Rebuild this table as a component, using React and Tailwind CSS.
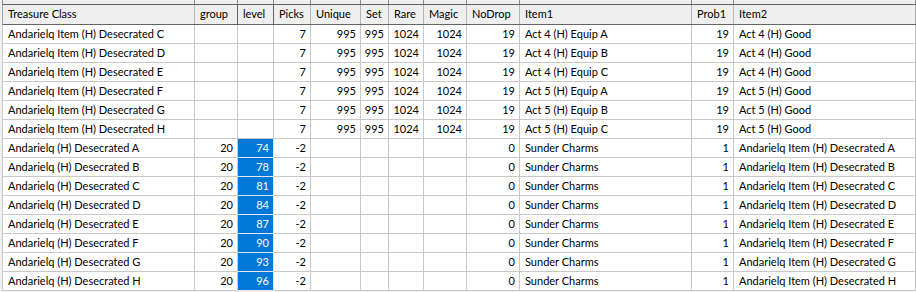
import React from "react";

const cols = [
  { key: "tc", label: "Treasure Class", w: "w-[192px]", align: "left" },
  { key: "group", label: "group", w: "w-[43px]", align: "right" },
  { key: "level", label: "level", w: "w-[36px]", align: "right" },
  { key: "picks", label: "Picks", w: "w-[37px]", align: "right" },
  { key: "unique", label: "Unique", w: "w-[50px]", align: "right" },
  { key: "set", label: "Set", w: "w-[28px]", align: "right" },
  { key: "rare", label: "Rare", w: "w-[35px]", align: "right" },
  { key: "magic", label: "Magic", w: "w-[43px]", align: "right" },
  { key: "nodrop", label: "NoDrop", w: "w-[53px]", align: "right" },
  { key: "item1", label: "Item1", w: "w-[172px]", align: "left" },
  { key: "prob1", label: "Prob1", w: "w-[42px]", align: "right" },
  { key: "item2", label: "Item2", w: "flex-1", align: "left" },
];

const itemRows = [
  ["C", "Act 4 (H) Equip A", "Act 4 (H) Good"],
  ["D", "Act 4 (H) Equip B", "Act 4 (H) Good"],
  ["E", "Act 4 (H) Equip C", "Act 4 (H) Good"],
  ["F", "Act 5 (H) Equip A", "Act 5 (H) Good"],
  ["G", "Act 5 (H) Equip B", "Act 5 (H) Good"],
  ["H", "Act 5 (H) Equip C", "Act 5 (H) Good"],
].map(([l, i1, i2]) => ({
  tc: `Andarielq Item (H) Desecrated ${l}`,
  group: "",
  level: "",
  picks: "7",
  unique: "995",
  set: "995",
  rare: "1024",
  magic: "1024",
  nodrop: "19",
  item1: i1,
  prob1: "19",
  item2: i2,
}));

const levels = [74, 78, 81, 84, 87, 90, 93, 96];
const groupRows = ["A", "B", "C", "D", "E", "F", "G", "H"].map((l, i) => ({
  tc: `Andarielq (H) Desecrated ${l}`,
  group: "20",
  level: String(levels[i]),
  picks: "-2",
  unique: "",
  set: "",
  rare: "",
  magic: "",
  nodrop: "0",
  item1: "Sunder Charms",
  prob1: "1",
  item2: `Andarielq Item (H) Desecrated ${l}`,
  selected: true,
}));

const rows = [...itemRows, ...groupRows];

export default function App() {
  return (
    <div
      className="w-[916px] h-[292px] overflow-hidden bg-[#f0f0f0] text-[11px] text-black"
      style={{ fontFamily: 'Lato, "Noto Sans", sans-serif' }}
    >
      {/* strip of the row above the header */}
      <div className="flex h-[4px] ml-[2px] border-l border-[#8c8c8c] bg-[#efefef]">
        {cols.map((c) => (
          <div key={c.key} className={`${c.w} shrink-0 border-r border-[#8c8c8c]`} />
        ))}
      </div>

      {/* header */}
      <div className="flex h-[21px] ml-[2px] border-l border-y border-[#646464] border-l-[#a0a0a0] bg-[#efefef]">
        {cols.map((c) => (
          <div
            key={c.key}
            className={`${c.w} shrink-0 flex items-center px-[5px] whitespace-nowrap overflow-hidden ${
              c.key === "group" || c.key === "level" ? "border-r border-[#646464]" : "border-r border-[#b4b4b4]"
            }`}
          >
            {c.label}
          </div>
        ))}
      </div>

      {/* body */}
      <div className="ml-[2px] border-l border-[#c8c8c8] bg-white">
        {rows.map((r, ri) => (
          <div key={ri} className="flex h-[19px]">
            {cols.map((c) => {
              const sel = r.selected && c.key === "level";
              return (
                <div
                  key={c.key}
                  className={`${c.w} shrink-0 flex items-center px-[5px] whitespace-nowrap overflow-hidden border-r border-b ${
                    c.align === "right" ? "justify-end pr-[4px]" : ""
                  } ${sel ? "bg-[#0078d7] text-white border-[#e0e8f2]" : "border-[#c8c8c8]"}`}
                >
                  {r[c.key]}
                </div>
              );
            })}
          </div>
        ))}
      </div>
    </div>
  );
}
